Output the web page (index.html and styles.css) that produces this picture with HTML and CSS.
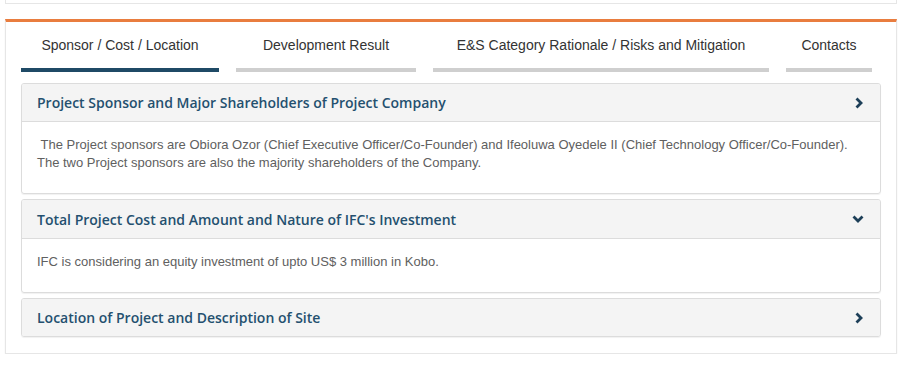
FILE: index.html
```html
<!DOCTYPE html>
<html lang="en">

<head>
    <meta charset="UTF-8" />
    <meta name="viewport" content="width=device-width, initial-scale=1.0" />
    <link rel="stylesheet" href="styles.css">
</head>

<body>
    <div class="prev-panel"></div>
    <main class="panel">
        <nav class="tabs">
            <a class="tab tab-sponsor active">Sponsor / Cost / Location</a>
            <a class="tab tab-result">Development Result</a>
            <a class="tab tab-es">E&amp;S Category Rationale / Risks and Mitigation</a>
            <a class="tab tab-contacts">Contacts</a>
        </nav>

        <section class="acc-item">
            <div class="acc-head">
                <h4>Project Sponsor and Major Shareholders of Project Company</h4>
                <svg class="chev" width="10" height="12" viewBox="0 0 10 12"><path d="M2.5 1.5 L7 6 L2.5 10.5" fill="none" stroke="#1d3f58" stroke-width="2.8" /></svg>
            </div>
            <div class="acc-body">
                <p>&nbsp;The Project sponsors are Obiora Ozor (Chief Executive Officer/Co-Founder) and Ifeoluwa Oyedele II (Chief Technology Officer/Co-Founder). The two Project sponsors are also the majority shareholders of the Company.</p>
            </div>
        </section>

        <section class="acc-item">
            <div class="acc-head">
                <h4>Total Project Cost and Amount and Nature of IFC's Investment</h4>
                <svg class="chev" width="12" height="10" viewBox="0 0 12 10"><path d="M1.5 2.5 L6 7 L10.5 2.5" fill="none" stroke="#1d3f58" stroke-width="2.8" /></svg>
            </div>
            <div class="acc-body">
                <p>IFC is considering an equity investment of upto US$ 3 million in Kobo.</p>
            </div>
        </section>

        <section class="acc-item">
            <div class="acc-head">
                <h4>Location of Project and Description of Site</h4>
                <svg class="chev" width="10" height="12" viewBox="0 0 10 12"><path d="M2.5 1.5 L7 6 L2.5 10.5" fill="none" stroke="#1d3f58" stroke-width="2.8" /></svg>
            </div>
        </section>
    </main>
</body>

</html>
```

FILE: styles.css
```css
body {
    margin: 0;
    padding: 0 6px 0 5px;
    background-color: #fff;
    font-family: "Liberation Sans", Arial, sans-serif;
}

.prev-panel {
    height: 3px;
    border: 1px solid #e6e6e6;
    border-top: none;
}

.panel {
    margin-top: 15px;
    border: 1px solid #e6e6e6;
    border-top: 3px solid #e97d3f;
    padding: 0 15px 16px;
    box-shadow: 0 1px 2px rgba(0, 0, 0, 0.05);
}

/* tabs */
.tabs {
    display: flex;
    gap: 17px;
    margin-bottom: 11px;
}

.tab {
    display: block;
    padding: 13px 0 13px;
    line-height: 20px;
    font-size: 14px;
    color: #333;
    text-align: center;
    border-bottom: 4px solid #cfcfcf;
}

.tab.active {
    border-bottom-color: #1f4a66;
}

.tab-sponsor {
    width: 198px;
}

.tab-result {
    width: 180px;
}

.tab-es {
    width: 336px;
}

.tab-contacts {
    width: 86px;
}

/* accordion */
.acc-item {
    border: 1px solid #dcdcdc;
    border-radius: 3px;
    margin-bottom: 5px;
    box-shadow: 0 1px 1px rgba(0, 0, 0, 0.06);
    overflow: hidden;
}

.acc-item:last-child {
    margin-bottom: 0;
}

.acc-head {
    display: flex;
    justify-content: space-between;
    align-items: center;
    height: 37px;
    padding: 0 15px;
    background-color: #f4f4f4;
}

.acc-item + .acc-item .acc-head {
    height: 38px;
}

.acc-item:last-child .acc-head {
    height: 37px;
}

.acc-head h4 {
    margin: 0;
    font-family: "Open Sans", sans-serif;
    font-size: 14px;
    font-weight: 600;
    color: #24506f;
}

.chev {
    margin-right: 1px;
}

.acc-body {
    border-top: 1px solid #dcdcdc;
    padding: 14px 15px 21px;
}

.acc-body p {
    margin: 0;
    font-size: 13px;
    line-height: 18px;
    color: #606060;
}
```
